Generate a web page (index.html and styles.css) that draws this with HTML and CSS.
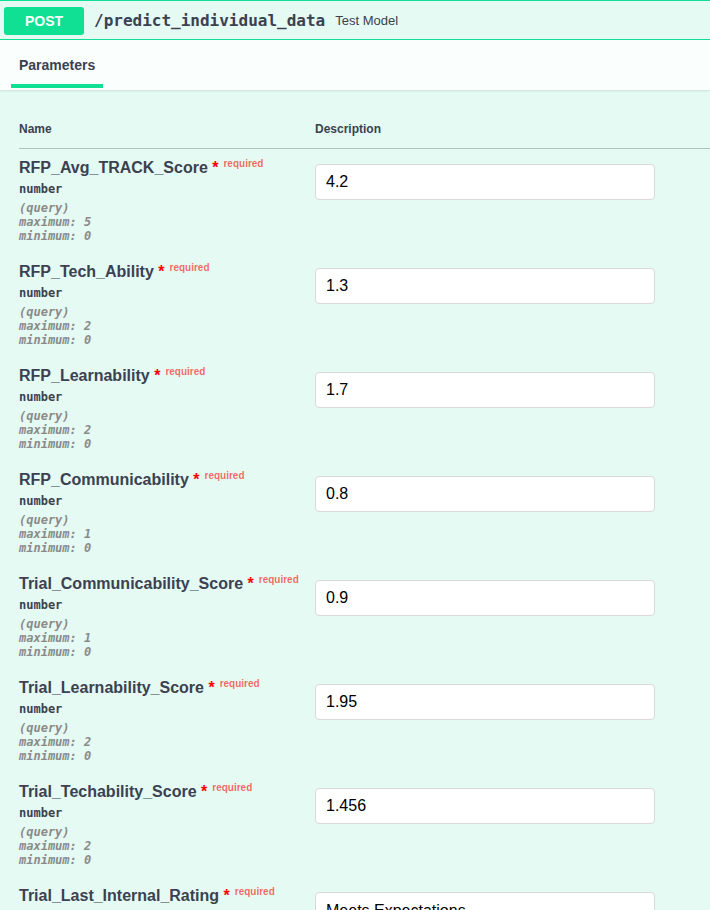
FILE: index.html
```html
<!DOCTYPE html>
<html>
<head>
<meta charset="utf-8">
<link rel="stylesheet" href="styles.css">
</head>
<body>
<div class="opblock">
  <div class="summary">
    <span class="method">POST</span>
    <span class="path">/predict_individual_data</span>
    <span class="desc">Test Model</span>
  </div>
  <div class="tabs">
    <div class="tab">Parameters</div>
  </div>
  <div class="table">
    <div class="thead">
      <div class="col-name">Name</div>
      <div class="col-desc">Description</div>
    </div>

    <div class="row">
      <div class="col-name">
        <div class="pname">RFP_Avg_TRACK_Score<span class="star">&nbsp;*</span><span class="req">required</span></div>
        <div class="ptype">number</div>
        <div class="pin">(query)</div>
        <div class="pext">maximum: 5</div>
        <div class="pext">minimum: 0</div>
      </div>
      <div class="col-desc"><input class="field" type="text" value="4.2"></div>
    </div>

    <div class="row">
      <div class="col-name">
        <div class="pname">RFP_Tech_Ability<span class="star">&nbsp;*</span><span class="req">required</span></div>
        <div class="ptype">number</div>
        <div class="pin">(query)</div>
        <div class="pext">maximum: 2</div>
        <div class="pext">minimum: 0</div>
      </div>
      <div class="col-desc"><input class="field" type="text" value="1.3"></div>
    </div>

    <div class="row">
      <div class="col-name">
        <div class="pname">RFP_Learnability<span class="star">&nbsp;*</span><span class="req">required</span></div>
        <div class="ptype">number</div>
        <div class="pin">(query)</div>
        <div class="pext">maximum: 2</div>
        <div class="pext">minimum: 0</div>
      </div>
      <div class="col-desc"><input class="field" type="text" value="1.7"></div>
    </div>

    <div class="row">
      <div class="col-name">
        <div class="pname">RFP_Communicability<span class="star">&nbsp;*</span><span class="req">required</span></div>
        <div class="ptype">number</div>
        <div class="pin">(query)</div>
        <div class="pext">maximum: 1</div>
        <div class="pext">minimum: 0</div>
      </div>
      <div class="col-desc"><input class="field" type="text" value="0.8"></div>
    </div>

    <div class="row">
      <div class="col-name">
        <div class="pname">Trial_Communicability_Score<span class="star">&nbsp;*</span><span class="req">required</span></div>
        <div class="ptype">number</div>
        <div class="pin">(query)</div>
        <div class="pext">maximum: 1</div>
        <div class="pext">minimum: 0</div>
      </div>
      <div class="col-desc"><input class="field" type="text" value="0.9"></div>
    </div>

    <div class="row">
      <div class="col-name">
        <div class="pname">Trial_Learnability_Score<span class="star">&nbsp;*</span><span class="req">required</span></div>
        <div class="ptype">number</div>
        <div class="pin">(query)</div>
        <div class="pext">maximum: 2</div>
        <div class="pext">minimum: 0</div>
      </div>
      <div class="col-desc"><input class="field" type="text" value="1.95"></div>
    </div>

    <div class="row">
      <div class="col-name">
        <div class="pname">Trial_Techability_Score<span class="star">&nbsp;*</span><span class="req">required</span></div>
        <div class="ptype">number</div>
        <div class="pin">(query)</div>
        <div class="pext">maximum: 2</div>
        <div class="pext">minimum: 0</div>
      </div>
      <div class="col-desc"><input class="field" type="text" value="1.456"></div>
    </div>

    <div class="row">
      <div class="col-name">
        <div class="pname">Trial_Last_Internal_Rating<span class="star">&nbsp;*</span><span class="req">required</span></div>
        <div class="ptype">string</div>
        <div class="pin">(query)</div>
      </div>
      <div class="col-desc"><div class="field select">Meets Expectations</div></div>
    </div>
  </div>
</div>
</body>
</html>
```

FILE: styles.css
```css
html, body {
  margin: 0;
  padding: 0;
}
body {
  background: #e4faf3;
  font-family: "Liberation Sans", Arial, sans-serif;
  color: #3b4151;
  width: 710px;
  overflow: hidden;
}
.opblock {
  background: #e4faf3;
  border-top: 1px solid #10df97;
}
.summary {
  display: flex;
  align-items: center;
  height: 38px;
  padding-left: 4px;
  border-bottom: 1px solid #10df97;
}
.method {
  display: flex;
  align-items: center;
  justify-content: center;
  width: 80px;
  height: 28px;
  margin-top: 1px;
  background: #0fe094;
  color: #ffffff;
  border-radius: 3px;
  font-size: 14px;
  font-weight: bold;
}
.path {
  margin-left: 10px;
  font-family: "DejaVu Sans Mono", monospace;
  font-weight: bold;
  font-size: 16px;
  color: #3b4151;
}
.desc {
  margin-left: 10px;
  font-size: 13px;
  color: #3b4151;
}
.tabs {
  background: rgba(255, 255, 255, 0.8);
  box-shadow: 0 1px 2px rgba(0, 0, 0, 0.1);
  padding: 0 0 2px 11px;
  display: flex;
}
.tab {
  padding: 17px 8px 11px;
  line-height: 16px;
  font-size: 14px;
  font-weight: bold;
  color: #3b4151;
  border-bottom: 4px solid #0fe094;
}
.table {
  margin-left: 19px;
}
.thead {
  display: flex;
  padding: 32px 0 12px;
  line-height: 14px;
  font-size: 12px;
  font-weight: bold;
  border-bottom: 1px solid rgba(59, 65, 81, 0.3);
}
.col-name {
  width: 296px;
  flex: none;
}
.col-desc {
  flex: 1;
}
.row {
  display: flex;
  height: 104px;
  box-sizing: border-box;
  padding-top: 9px;
}
.row .col-desc {
  padding-top: 6px;
}
.pname {
  font-size: 16px;
  line-height: 20px;
  font-weight: bold;
  white-space: nowrap;
}
.star {
  color: #ff0000;
}
.req {
  position: relative;
  top: -6px;
  padding-left: 5px;
  font-size: 10px;
  color: rgba(255, 0, 0, 0.6);
}
.ptype {
  margin-top: 2px;
  font-family: "DejaVu Sans Mono", monospace;
  font-weight: bold;
  font-size: 12px;
  line-height: 14px;
}
.pin {
  margin-top: 5px;
}
.pin, .pext {
  font-family: "DejaVu Sans Mono", monospace;
  font-style: italic;
  font-weight: bold;
  font-size: 12px;
  line-height: 14px;
  color: #8a8a8a;
}
.field {
  display: block;
  box-sizing: border-box;
  width: 340px;
  height: 36px;
  margin: 0;
  padding: 8px 10px;
  border: 1px solid #d9d9d9;
  border-radius: 4px;
  background: #ffffff;
  font-family: "Liberation Sans", Arial, sans-serif;
  font-size: 16px;
  line-height: 18px;
  color: #000000;
  outline: none;
}
.select {
  padding-top: 9px;
}
```
